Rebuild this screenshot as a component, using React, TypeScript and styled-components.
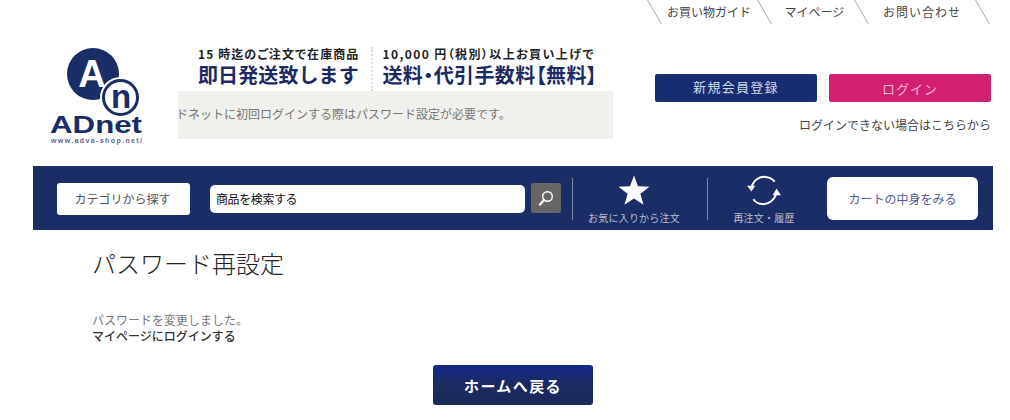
import styled, { createGlobalStyle } from "styled-components";

const GlobalStyle = createGlobalStyle`
  html, body {
    margin: 0;
    padding: 0;
    background: #fff;
    font-family: "Noto Sans CJK JP", "Liberation Sans", sans-serif;
    color: #333;
  }
  * { box-sizing: border-box; }
`;

const Page = styled.div`
  width: 1010px;
  height: 420px;
  overflow: hidden;
`;

const TopNav = styled.nav`
  display: flex;
  justify-content: flex-end;
  height: 24px;
  padding-right: 27px;
`;

const TopLink = styled.a<{ $w: number; $pad?: number; $spacing?: number }>`
  position: relative;
  display: flex;
  align-items: center;
  justify-content: center;
  width: ${(p) => p.$w}px;
  height: 24px;
  padding-left: ${(p) => p.$pad ?? 0}px;
  font-size: 12px;
  line-height: 22px;
  letter-spacing: ${(p) => p.$spacing ?? 0}px;
  color: #444;

  &::before,
  &:last-child::after {
    content: "";
    position: absolute;
    top: 0;
    left: 0;
    width: 1px;
    height: 24px;
    background: #a9a9a9;
    transform: skewX(30deg);
  }

  &:last-child::after {
    left: auto;
    right: 0;
  }
`;

const Header = styled.header`
  display: flex;
  height: 142px;
  padding-left: 50px;
`;

const Logo = styled.svg`
  display: block;
  width: 94px;
  height: 98px;
  margin-top: 24px;
  flex: none;
`;

const Middle = styled.div`
  width: 435px;
  margin-left: 34px;
  padding-top: 23px;
  flex: none;
`;

const Promo = styled.div`
  display: flex;
  height: 44px;
  padding-left: 20px;
`;

const PromoCol = styled.div<{ $divided?: boolean }>`
  padding-left: ${(p) => (p.$divided ? "9px" : "0")};
  margin-left: ${(p) => (p.$divided ? "12px" : "0")};
  border-left: ${(p) => (p.$divided ? "2px dotted #ddd" : "0")};
`;

const PromoSmall = styled.div<{ $spacing: number }>`
  font-size: 12px;
  line-height: 14px;
  font-weight: 700;
  font-feature-settings: "palt";
  letter-spacing: ${(p) => p.$spacing}px;
  color: #222;
  white-space: nowrap;
`;

const PromoBig = styled.div<{ $palt?: boolean }>`
  margin-top: 1px;
  font-size: 20px;
  line-height: 26px;
  font-weight: 700;
  font-feature-settings: ${(p) => (p.$palt ? '"palt"' : "normal")};
  letter-spacing: ${(p) => (p.$palt ? "0.4px" : "0.1px")};
  color: #1b2a65;
  white-space: nowrap;
`;

const Notice = styled.div`
  height: 48px;
  background: #f0f0ec;
  overflow: hidden;
  font-size: 12px;
  line-height: 46px;
  color: #777;
  text-indent: -14px;
  white-space: nowrap;
`;

const Account = styled.div`
  width: 336px;
  margin-left: 42px;
  padding-top: 50px;
  flex: none;
`;

const AccountButtons = styled.div`
  display: flex;
  gap: 12px;
`;

const AccountButton = styled.a<{ $bg: string; $spacing: number; $color: string; $raise: number }>`
  display: flex;
  align-items: center;
  justify-content: center;
  width: 162px;
  height: 28px;
  padding-bottom: ${(p) => p.$raise}px;
  border-radius: 2px;
  background: ${(p) => p.$bg};
  color: ${(p) => p.$color};
  font-size: 13px;
  letter-spacing: ${(p) => p.$spacing}px;
`;

const ForgotLink = styled.a`
  display: block;
  margin-top: 14px;
  text-align: right;
  font-size: 12px;
  line-height: 18px;
  color: #444;
`;

const NavBar = styled.div`
  display: flex;
  align-items: center;
  width: 960px;
  height: 64px;
  margin-left: 33px;
  background: #1b2d66;
`;

const CategoryButton = styled.a`
  display: flex;
  align-items: center;
  justify-content: center;
  width: 133px;
  height: 32px;
  margin: 1px 0 0 24px;
  padding-right: 2px;
  border-radius: 3px;
  background: #fff;
  font-size: 12px;
  color: #555;
`;

const SearchInput = styled.div`
  display: flex;
  align-items: center;
  width: 315px;
  height: 28px;
  margin: 2px 0 0 20px;
  padding: 0 0 2px 6px;
  border-radius: 5px;
  background: #fff;
  font-size: 12px;
  letter-spacing: -0.4px;
  color: #111;
`;

const SearchButton = styled.button`
  display: flex;
  align-items: center;
  justify-content: center;
  width: 30px;
  height: 30px;
  margin-left: 6px;
  padding: 0;
  border: 0;
  border-radius: 2px;
  background: #666;
`;

const Divider = styled.div<{ $left: number }>`
  width: 1px;
  height: 42px;
  margin: 1px 0 0 ${(p) => p.$left}px;
  background: #7f89a8;
  flex: none;
`;

const IconLink = styled.a<{ $w: number }>`
  display: flex;
  flex-direction: column;
  align-items: center;
  width: ${(p) => p.$w}px;
  height: 64px;
  padding-top: 9px;
  color: #b9bfd0;
  font-size: 10px;
  line-height: 12px;
  letter-spacing: 0.2px;
  white-space: nowrap;

  svg {
    display: block;
    margin-bottom: 6px;
  }
`;

const CartButton = styled.a`
  display: flex;
  align-items: center;
  justify-content: center;
  width: 151px;
  height: 43px;
  margin: 1px 0 0 7px;
  border-radius: 6px;
  background: #fff;
  font-size: 12px;
  color: #55589f;
`;

const Main = styled.main`
  padding: 18px 0 0 92px;
`;

const Title = styled.h1`
  margin: 0;
  font-size: 24px;
  line-height: 30px;
  font-weight: 300;
  color: #222;
`;

const Message = styled.p`
  margin: 34px 0 0;
  font-size: 12px;
  line-height: 16px;
  color: #777;
`;

const LoginLink = styled.a`
  display: block;
  font-size: 12px;
  line-height: 16px;
  font-weight: 500;
  color: #333;
`;

const HomeRow = styled.div`
  display: flex;
  justify-content: center;
  margin: 21px 0 0 -76px;
`;

const HomeButton = styled.a`
  display: flex;
  align-items: center;
  justify-content: center;
  width: 160px;
  height: 40px;
  border-radius: 3px;
  background: linear-gradient(#14298a 0%, #1b2a60 50%, #1b2a5c 100%);
  color: #fff;
  font-size: 15px;
  font-weight: 700;
  letter-spacing: 1.4px;
`;

function App() {
  return (
    <Page>
      <GlobalStyle />
      <TopNav>
        <TopLink $w={110}>お買い物ガイド</TopLink>
        <TopLink $w={97} $pad={4}>マイページ</TopLink>
        <TopLink $w={122} $spacing={1}>お問い合わせ</TopLink>
      </TopNav>

      <Header>
        <Logo viewBox="0 0 94 98">
          <circle cx="43" cy="26" r="26" fill="#1b2d66" />
          <circle cx="70.500" cy="49.500" r="20.500" fill="#fff" />
          <circle cx="70.500" cy="49.500" r="17" fill="none" stroke="#1b2d66" strokeWidth="3" />
          <text x="42" y="39" textAnchor="middle" fontFamily="Liberation Sans" fontWeight="700" fontSize="38" fill="#fff">A</text>
          <text x="71" y="60" textAnchor="middle" fontFamily="Liberation Sans" fontWeight="700" fontSize="33" fill="#1b2d66">n</text>
          <text x="0" y="85" fontFamily="Liberation Sans" fontWeight="700" fontSize="24" fill="#1b2d66" textLength="92" lengthAdjust="spacingAndGlyphs">ADnet</text>
          <text x="1" y="95" fontFamily="Liberation Sans" fontWeight="700" fontSize="7" fill="#5a6690" textLength="91" lengthAdjust="spacing">www.adva-shop.net/</text>
        </Logo>

        <Middle>
          <Promo>
            <PromoCol>
              <PromoSmall $spacing={1.1}>15 時迄のご注文で在庫商品</PromoSmall>
              <PromoBig>即日発送致します</PromoBig>
            </PromoCol>
            <PromoCol $divided>
              <PromoSmall $spacing={1.4}>10,000 円（税別）以上お買い上げで</PromoSmall>
              <PromoBig $palt>送料・代引手数料【無料】</PromoBig>
            </PromoCol>
          </Promo>
          <Notice>アドネットに初回ログインする際はパスワード設定が必要です。</Notice>
        </Middle>

        <Account>
          <AccountButtons>
            <AccountButton $bg="#162d72" $color="#d5d9e6" $spacing={1.3} $raise={3}>新規会員登録</AccountButton>
            <AccountButton $bg="#d21f72" $color="#f3b5d0" $spacing={1} $raise={0}>ログイン</AccountButton>
          </AccountButtons>
          <ForgotLink>ログインできない場合はこちらから</ForgotLink>
        </Account>
      </Header>

      <NavBar>
        <CategoryButton>カテゴリから探す</CategoryButton>
        <SearchInput>商品を検索する</SearchInput>
        <SearchButton aria-label="検索">
          <svg width="18" height="18" viewBox="0 0 18 18" fill="none" stroke="#fff">
            <circle cx="10.500" cy="7.500" r="4.800" strokeWidth="1.400" />
            <path d="M7 11 L3 15.500" strokeWidth="2.400" strokeLinecap="round" />
          </svg>
        </SearchButton>
        <Divider $left={11} />
        <IconLink $w={122}>
          <svg width="32" height="31" viewBox="0 0 34 32" fill="#fff">
            <path d="M17 0 L21.200 11.400 L33.400 11.900 L23.800 19.400 L27.100 31.200 L17 24.400 L6.900 31.200 L10.200 19.400 L0.600 11.900 L12.800 11.400 Z" />
          </svg>
          お気に入りから注文
        </IconLink>
        <Divider $left={12} />
        <IconLink $w={112}>
          <svg width="36" height="31" viewBox="0 0 36 32" fill="none" stroke="#fff" strokeWidth="2">
            <path d="M5 13 C7 5 14 1 20 2 C24 2.500 27 4 29 7" />
            <path d="M31 18 C29 26 22 31 16 30 C12 29.500 9 28 7 25" />
            <path d="M0.500 11 L9 11 L5 17 Z" fill="#fff" stroke="none" />
            <path d="M35.500 21 L27 21 L31 14 Z" fill="#fff" stroke="none" />
          </svg>
          再注文・履歴
        </IconLink>
        <CartButton>カートの中身をみる</CartButton>
      </NavBar>

      <Main>
        <Title>パスワード再設定</Title>
        <Message>パスワードを変更しました。</Message>
        <LoginLink>マイページにログインする</LoginLink>
        <HomeRow>
          <HomeButton>ホームへ戻る</HomeButton>
        </HomeRow>
      </Main>
    </Page>
  );
}

export default App;
